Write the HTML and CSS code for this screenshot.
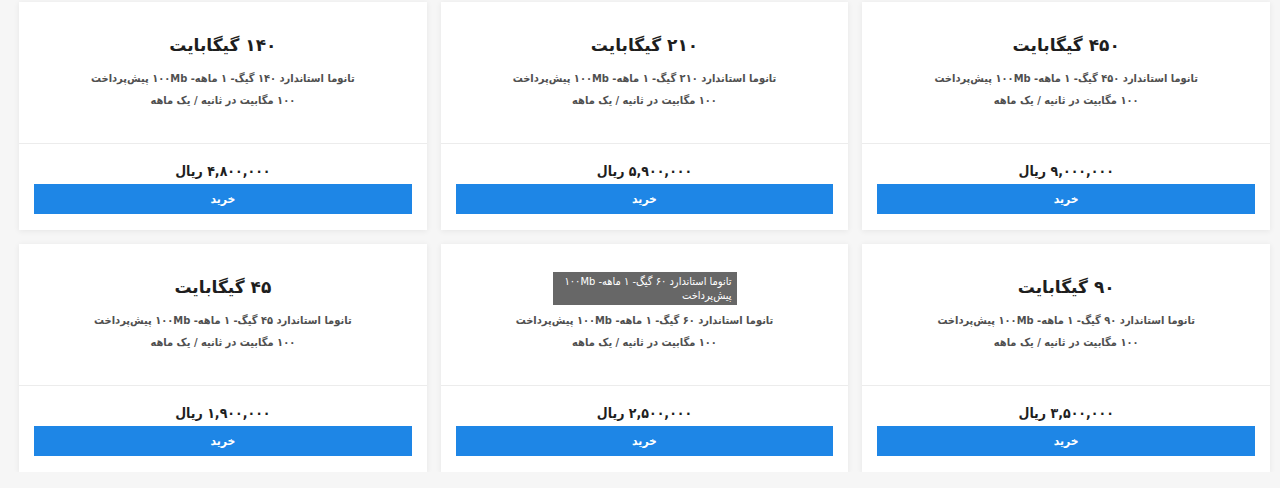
FILE: index.html
```html
<!DOCTYPE html>
<html lang="fa" dir="rtl">
<head>
<meta charset="utf-8">
<title>بسته‌های اینترنت</title>
<link rel="stylesheet" href="styles.css">
</head>
<body>
<main class="plans">
  <article class="plan">
    <div class="plan-info">
      <h3 class="plan-title">۴۵۰ گیگابایت</h3>
      <p class="plan-desc">تانوما استاندارد ۴۵۰ گیگ- ۱ ماهه- ۱۰۰Mb پیش‌پرداخت<br>۱۰۰ مگابیت در ثانیه / یک ماهه</p>
    </div>
    <div class="plan-buy">
      <div class="plan-price">۹,۰۰۰,۰۰۰ ریال</div>
      <button class="buy-btn">خرید</button>
    </div>
  </article>
  <article class="plan">
    <div class="plan-info">
      <h3 class="plan-title">۲۱۰ گیگابایت</h3>
      <p class="plan-desc">تانوما استاندارد ۲۱۰ گیگ- ۱ ماهه- ۱۰۰Mb پیش‌پرداخت<br>۱۰۰ مگابیت در ثانیه / یک ماهه</p>
    </div>
    <div class="plan-buy">
      <div class="plan-price">۵,۹۰۰,۰۰۰ ریال</div>
      <button class="buy-btn">خرید</button>
    </div>
  </article>
  <article class="plan">
    <div class="plan-info">
      <h3 class="plan-title">۱۴۰ گیگابایت</h3>
      <p class="plan-desc">تانوما استاندارد ۱۴۰ گیگ- ۱ ماهه- ۱۰۰Mb پیش‌پرداخت<br>۱۰۰ مگابیت در ثانیه / یک ماهه</p>
    </div>
    <div class="plan-buy">
      <div class="plan-price">۴,۸۰۰,۰۰۰ ریال</div>
      <button class="buy-btn">خرید</button>
    </div>
  </article>
  <article class="plan">
    <div class="plan-info">
      <h3 class="plan-title">۹۰ گیگابایت</h3>
      <p class="plan-desc">تانوما استاندارد ۹۰ گیگ- ۱ ماهه- ۱۰۰Mb پیش‌پرداخت<br>۱۰۰ مگابیت در ثانیه / یک ماهه</p>
    </div>
    <div class="plan-buy">
      <div class="plan-price">۳,۵۰۰,۰۰۰ ریال</div>
      <button class="buy-btn">خرید</button>
    </div>
  </article>
  <article class="plan">
    <div class="plan-info">
      <h3 class="plan-title">۶۰ گیگابایت</h3>
      <p class="plan-desc">تانوما استاندارد ۶۰ گیگ- ۱ ماهه- ۱۰۰Mb پیش‌پرداخت<br>۱۰۰ مگابیت در ثانیه / یک ماهه</p>
      <div class="tooltip">تانوما استاندارد ۶۰ گیگ- ۱ ماهه- ۱۰۰Mb پیش‌پرداخت</div>
    </div>
    <div class="plan-buy">
      <div class="plan-price">۲,۵۰۰,۰۰۰ ریال</div>
      <button class="buy-btn">خرید</button>
    </div>
  </article>
  <article class="plan">
    <div class="plan-info">
      <h3 class="plan-title">۴۵ گیگابایت</h3>
      <p class="plan-desc">تانوما استاندارد ۴۵ گیگ- ۱ ماهه- ۱۰۰Mb پیش‌پرداخت<br>۱۰۰ مگابیت در ثانیه / یک ماهه</p>
    </div>
    <div class="plan-buy">
      <div class="plan-price">۱,۹۰۰,۰۰۰ ریال</div>
      <button class="buy-btn">خرید</button>
    </div>
  </article>
</main>
</body>
</html>
```

FILE: styles.css
```css
* {
  box-sizing: border-box;
}

html,
body {
  margin: 0;
  background: #f6f6f6;
}

body {
  font-family: "DejaVu Sans", sans-serif;
  color: #222;
}

.plans {
  display: grid;
  grid-template-columns: repeat(3, 1fr);
  column-gap: 14px;
  row-gap: 14px;
  padding: 2px 10px 0 19px;
}

.plan {
  background: #fff;
  height: 228px;
  box-shadow: 0 1px 6px rgba(0, 0, 0, 0.07);
  display: flex;
  flex-direction: column;
}

.plan-info {
  position: relative;
  height: 142px;
  padding-top: 30px;
  border-bottom: 1px solid #ececec;
  text-align: center;
}

.plan-title {
  margin: 0;
  font-size: 17px;
  line-height: 26px;
  font-weight: bold;
  color: #1e1e1e;
}

.plan-desc {
  margin: 10px 0 0;
  font-family: "DejaVu Sans Condensed", "DejaVu Sans", sans-serif;
  font-size: 11px;
  line-height: 22px;
  font-weight: bold;
  color: #505050;
}

/* hover hint over the plan name */
.tooltip {
  position: absolute;
  top: 28px;
  left: 50%;
  width: 184px;
  margin-left: -92px;
  padding: 3px 5px 2px;
  background: #676767;
  color: #fff;
  font-family: "DejaVu Sans Condensed", "DejaVu Sans", sans-serif;
  font-size: 11px;
  line-height: 14px;
  text-align: right;
}

.plan-buy {
  padding: 17px 15px 16px;
  text-align: center;
}

.plan-price {
  font-family: "DejaVu Sans Condensed", "DejaVu Sans", sans-serif;
  font-size: 14px;
  line-height: 20px;
  font-weight: bold;
  color: #1e1e1e;
  margin-bottom: 3px;
}

.buy-btn {
  display: block;
  width: 100%;
  height: 30px;
  border: 0;
  border-radius: 0;
  background: #1e86e6;
  color: #fff;
  font-family: "DejaVu Sans Condensed", "DejaVu Sans", sans-serif;
  font-size: 12px;
  font-weight: bold;
  cursor: pointer;
}
```
